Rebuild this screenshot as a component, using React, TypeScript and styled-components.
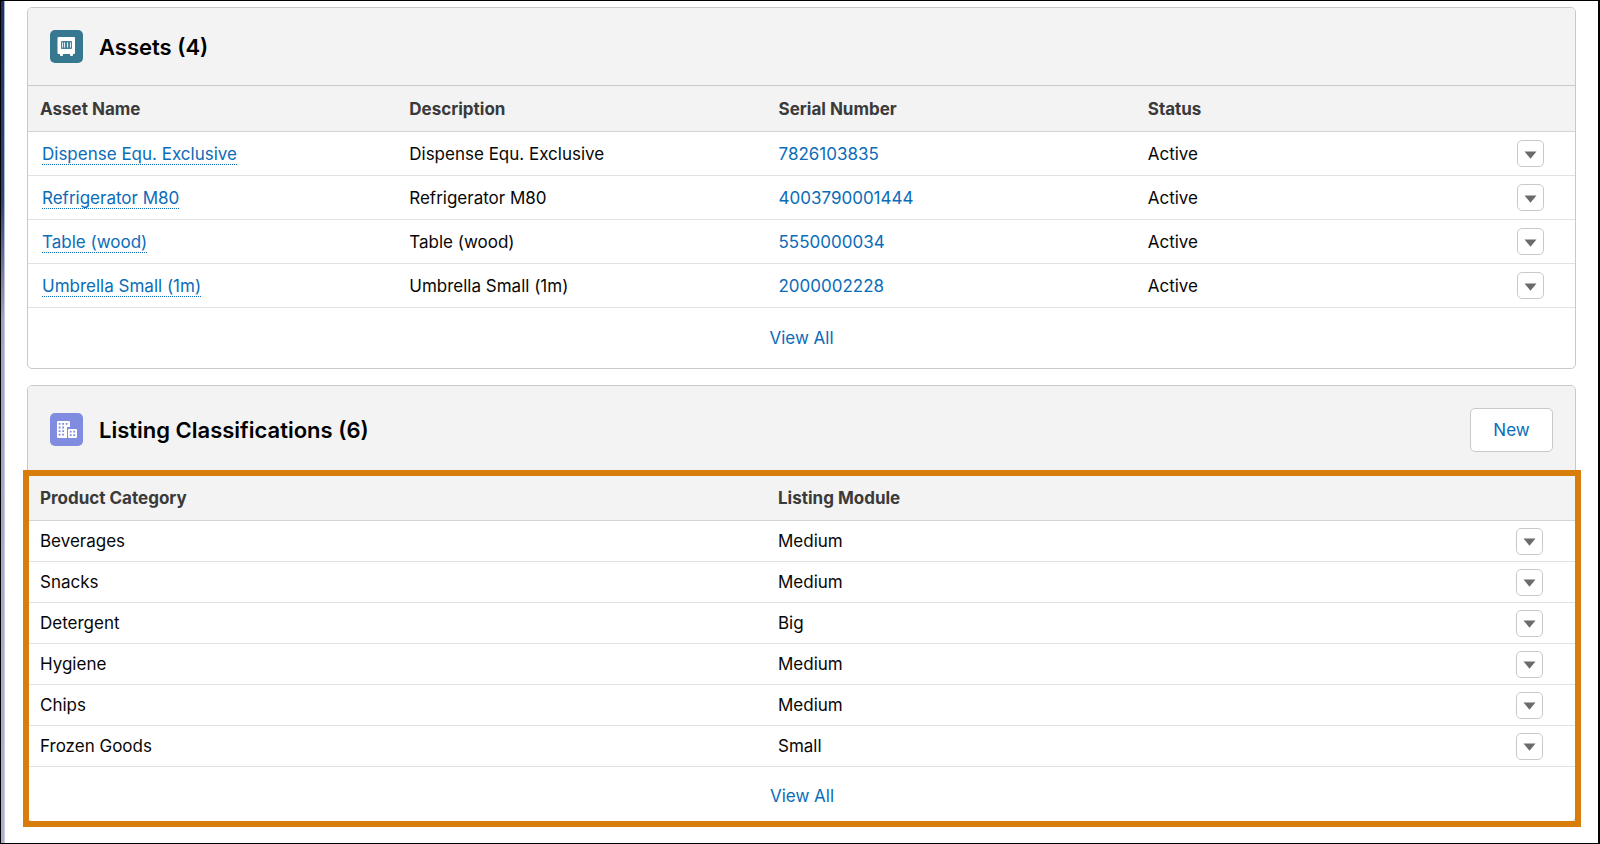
import React from "react";
import styled, { createGlobalStyle } from "styled-components";

const GlobalStyle = createGlobalStyle`
  * { box-sizing: border-box; }
  body {
    margin: 0;
    background: #fff;
    color: #080707;
    font-family: Inter, "Liberation Sans", sans-serif;
    font-size: 17px;
    line-height: 24px;
  }
`;

const Page = styled.main`
  min-height: 100vh;
  display: flex;
  border: 1px solid #000;
  border-right-width: 2px;
`;

const Backdrop = styled.div`
  width: 4px;
  background: linear-gradient(to right, transparent 75%, rgba(205, 212, 232, 0.8) 75%),
    linear-gradient(to bottom, #1b3260 0, #2c4672 200px, #a3a3bf 320px, #b0b0c8 100%);
`;

const Content = styled.div`
  flex: 1;
  min-width: 0;
  display: flex;
  flex-direction: column;
  gap: 16px;
  padding: 6px 22px 15px;
`;

const Card = styled.section`
  border: 1px solid #c9c9c9;
  border-radius: 5px;
  background: #fff;
`;

const CardHeader = styled.header<{ $tall?: boolean }>`
  display: flex;
  align-items: center;
  gap: 16px;
  height: ${(p) => (p.$tall ? 87 : 78)}px;
  padding: 0 22px;
  border-bottom: ${(p) => (p.$tall ? 0 : 1)}px solid #c9c9c9;
  border-radius: 4px 4px 0 0;
  background: #f3f3f3;
`;

const Tile = styled.span<{ $color: string }>`
  display: flex;
  width: 33px;
  height: 33px;
  border-radius: 5px;
  background: ${(p) => p.$color};
  svg { width: 33px; height: 33px; }
`;

const Title = styled.h2`
  flex: 1;
  margin: 0;
  font-size: 22px;
  font-weight: 600;
  line-height: 28px;
  color: #000;
`;

const NewButton = styled.button`
  width: 83px;
  height: 44px;
  border: 1px solid #c9c9c9;
  border-radius: 5px;
  background: #fff;
  color: #0b6cb8;
  font: inherit;
  cursor: pointer;
`;

const Highlight = styled.div`
  margin: -3px -6px -6px -5px;
  border: 6px solid #d87c0a;
`;

const Table = styled.table`
  width: 100%;
  table-layout: fixed;
  border-collapse: separate;
  border-spacing: 0;
`;

const Col = styled.col<{ $span: number }>`
  width: calc((100% - 70px) * ${(p) => p.$span} / 4);
`;

const MenuCol = styled.col`
  width: 70px;
`;

const HeadCell = styled.th<{ $height: number; $pad: number }>`
  height: ${(p) => p.$height}px;
  padding: 0 ${(p) => p.$pad}px;
  border-bottom: 1px solid #d4d4d4;
  background: #f3f3f3;
  color: #3a3a3a;
  font-weight: 700;
  text-align: left;
`;

const Cell = styled.td<{ $height: number; $pad: number }>`
  height: ${(p) => p.$height}px;
  padding: 0 ${(p) => p.$pad}px;
  border-bottom: 1px solid #e2e2e2;
  color: #080707;
`;

const Link = styled.a<{ $dotted?: boolean }>`
  display: inline-block;
  color: #0b6cb8;
  text-decoration: none;
  ${(p) => p.$dotted && "margin-left: 2px; line-height: 20px; border-bottom: 1px dotted #0b6cb8;"}
`;

const MenuButton = styled.button`
  display: flex;
  align-items: center;
  justify-content: center;
  width: 27px;
  height: 27px;
  padding: 2px 0 0;
  border: 1px solid #c9c9c9;
  border-radius: 5px;
  background: #fff;
  cursor: pointer;
`;

const CardFooter = styled.footer<{ $height: number; $offset?: number }>`
  display: flex;
  align-items: center;
  justify-content: center;
  height: ${(p) => p.$height}px;
  padding-top: ${(p) => p.$offset ?? 0}px;
`;

function AssetIcon() {
  return (
    <svg viewBox="0 0 33 33" aria-hidden="true">
      <path fill="#fff" d="M8.500 7h15.500a1 1 0 0 1 1 1v15a1 1 0 0 1-1 1h-1v1a1 1 0 0 1-1 1h-1a1 1 0 0 1-1-1v-1h-7v1a1 1 0 0 1-1 1h-1a1 1 0 0 1-1-1v-1H8.500a1 1 0 0 1-1-1V8a1 1 0 0 1 1-1z" />
      <rect x="11" y="11" width="11" height="8" rx="1" fill="#4a8399" />
      <path stroke="#e3eef2" d="M12.500 12.500v5M14.500 12.500v5M17.500 12.500v5M20.500 12.500v5" />
    </svg>
  );
}

function BuildingIcon() {
  return (
    <svg viewBox="0 0 33 33" aria-hidden="true">
      <path fill="#fff" d="M8 8h11a1 1 0 0 1 1 1v5h-3v11H8a1 1 0 0 1-1-1V9a1 1 0 0 1 1-1z" />
      <rect x="18" y="16" width="9" height="9" rx="1" fill="#fff" />
      <path fill="#7f8ce0" d="M8.700 10h1.800v1.800H8.700zM12.200 10h1.800v1.800h-1.800zM15.700 10h1.800v1.800h-1.800zM8.700 13.600h1.800v1.800H8.700zM12.200 13.600h1.800v1.800h-1.800zM8.700 17.200h1.800v1.800H8.700zM12.200 17.200h1.800v1.800h-1.800zM8.700 20.800h1.800v1.800H8.700zM12.200 20.800h1.800v1.800h-1.800zM19.800 17.800h1.800v1.800h-1.800zM23.300 17.800h1.800v1.800h-1.800zM19.800 21.300h1.800v1.800h-1.800zM23.300 21.300h1.800v1.800h-1.800z" />
    </svg>
  );
}

function RowMenu({ label }: { label: string }) {
  return (
    <MenuButton type="button" aria-label={`Actions for ${label}`}>
      <svg width="13" height="8" viewBox="0 0 13 8" aria-hidden="true">
        <path d="M0.500 0.500h12L6.500 7.700z" fill="#6b6b6b" />
      </svg>
    </MenuButton>
  );
}

const assets = [
  { name: "Dispense Equ. Exclusive", serial: "7826103835" },
  { name: "Refrigerator M80", serial: "4003790001444" },
  { name: "Table (wood)", serial: "5550000034" },
  { name: "Umbrella Small (1m)", serial: "2000002228" },
];

const classifications = [
  ["Beverages", "Medium"],
  ["Snacks", "Medium"],
  ["Detergent", "Big"],
  ["Hygiene", "Medium"],
  ["Chips", "Medium"],
  ["Frozen Goods", "Small"],
];

export default function App() {
  return (
    <>
      <GlobalStyle />
      <Page>
        <Backdrop />
        <Content>
          <Card>
            <CardHeader>
              <Tile $color="#35788f"><AssetIcon /></Tile>
              <Title>Assets (4)</Title>
            </CardHeader>
            <Table>
              <colgroup>
                <Col $span={1} /><Col $span={1} /><Col $span={1} /><Col $span={1} /><MenuCol />
              </colgroup>
              <thead>
                <tr>
                  {["Asset Name", "Description", "Serial Number", "Status", ""].map((h) => (
                    <HeadCell key={h} $height={46} $pad={12} scope="col">{h}</HeadCell>
                  ))}
                </tr>
              </thead>
              <tbody>
                {assets.map((a) => (
                  <tr key={a.name}>
                    <Cell $height={44} $pad={12}><Link $dotted href="#">{a.name}</Link></Cell>
                    <Cell $height={44} $pad={12}>{a.name}</Cell>
                    <Cell $height={44} $pad={12}><Link href="#">{a.serial}</Link></Cell>
                    <Cell $height={44} $pad={12}>Active</Cell>
                    <Cell $height={44} $pad={12}><RowMenu label={a.name} /></Cell>
                  </tr>
                ))}
              </tbody>
            </Table>
            <CardFooter $height={60}><Link href="#">View All</Link></CardFooter>
          </Card>

          <Card>
            <CardHeader $tall>
              <Tile $color="#7f8ce0"><BuildingIcon /></Tile>
              <Title>Listing Classifications (6)</Title>
              <NewButton type="button">New</NewButton>
            </CardHeader>
            <Highlight>
              <Table>
                <colgroup>
                  <Col $span={2} /><Col $span={2} /><MenuCol />
                </colgroup>
                <thead>
                  <tr>
                    {["Product Category", "Listing Module", ""].map((h) => (
                      <HeadCell key={h} $height={45} $pad={11} scope="col">{h}</HeadCell>
                    ))}
                  </tr>
                </thead>
                <tbody>
                  {classifications.map(([category, module]) => (
                    <tr key={category}>
                      <Cell $height={41} $pad={11}>{category}</Cell>
                      <Cell $height={41} $pad={11}>{module}</Cell>
                      <Cell $height={41} $pad={11}><RowMenu label={category} /></Cell>
                    </tr>
                  ))}
                </tbody>
              </Table>
              <CardFooter $height={54} $offset={4}><Link href="#">View All</Link></CardFooter>
            </Highlight>
          </Card>
        </Content>
      </Page>
    </>
  );
}
